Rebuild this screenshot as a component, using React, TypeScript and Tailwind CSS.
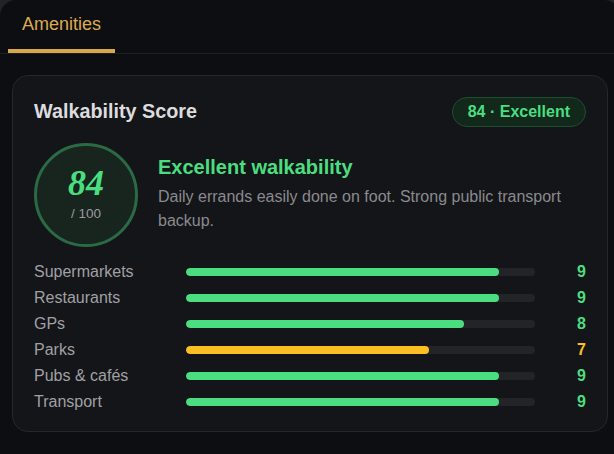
import React from 'react';

const rows = [
  { label: 'Supermarkets', score: 9 },
  { label: 'Restaurants', score: 9 },
  { label: 'GPs', score: 8 },
  { label: 'Parks', score: 7 },
  { label: 'Pubs & cafés', score: 9 },
  { label: 'Transport', score: 9 },
];

export default function App() {
  return (
    <div className="w-[614px] h-[454px] overflow-hidden bg-[#232326] font-['Liberation_Sans',Arial,sans-serif]">
      <div className="w-[620px] h-[454px] rounded-t-2xl bg-[#0d0e12]">
        {/* Tabs */}
        <div className="flex pl-2 border-b border-[#1e1f24]">
          <button className="h-[53px] px-[14px] border-b-4 border-[#d9a84e] text-[18px] text-[#dcaa4f]">
            Amenities
          </button>
        </div>

        <div className="px-3 pt-[21px]">
          <div className="w-[596px] rounded-2xl border border-[#26272b] bg-[#141518] px-[21px] pt-5 pb-4">
            {/* Header */}
            <div className="flex items-center justify-between h-[31px]">
              <h2 className="text-[19.8px] font-bold text-[#dcdcdf]">Walkability Score</h2>
              <span className="h-[30px] px-[15px] flex items-center rounded-full border-[1.5px] border-[#1f4d31] bg-[#11281b] text-[16px] font-bold text-[#4ade80]">
                84 · Excellent
              </span>
            </div>

            {/* Score */}
            <div className="mt-4 flex items-start gap-5">
              <div className="w-[104px] h-[104px] shrink-0 rounded-full border-[3px] border-[#2a6b45] bg-[#18241e] flex flex-col items-center justify-center">
                <span className="font-['Liberation_Serif',serif] italic font-bold text-[36px] leading-[36px] text-[#4ade80]">
                  84
                </span>
                <span className="mt-[3px] text-[13.5px] text-[#9a9a9e]">/ 100</span>
              </div>
              <div className="flex-1 pt-[10px]">
                <h3 className="text-[20px] font-bold text-[#4ade80] leading-[28px] mb-[4px]">Excellent walkability</h3>
                <p className="text-[16px] leading-[24px] text-[#8a8a8f]">
                  Daily errands easily done on foot. Strong public transport backup.
                </p>
              </div>
            </div>

            {/* Breakdown */}
            <div className="mt-3 flex flex-col">
              {rows.map((r) => {
                const color = r.score >= 8 ? 'bg-[#4ade80]' : 'bg-[#fbbf24]';
                const text = r.score >= 8 ? 'text-[#4ade80]' : 'text-[#fbbf24]';
                return (
                  <div key={r.label} className="grid grid-cols-[152px_1fr_51px] items-center h-[26px]">
                    <span className="text-[16px] text-[#a0a0a5]">{r.label}</span>
                    <div className="h-2 rounded-full bg-[#232428] overflow-hidden">
                      <div className={`h-full rounded-full ${color}`} style={{ width: `${r.score * 10 - 0.4}%` }} />
                    </div>
                    <span className={`text-right text-[16px] font-bold ${text}`}>{r.score}</span>
                  </div>
                );
              })}
            </div>
          </div>
        </div>
      </div>
    </div>
  );
}
